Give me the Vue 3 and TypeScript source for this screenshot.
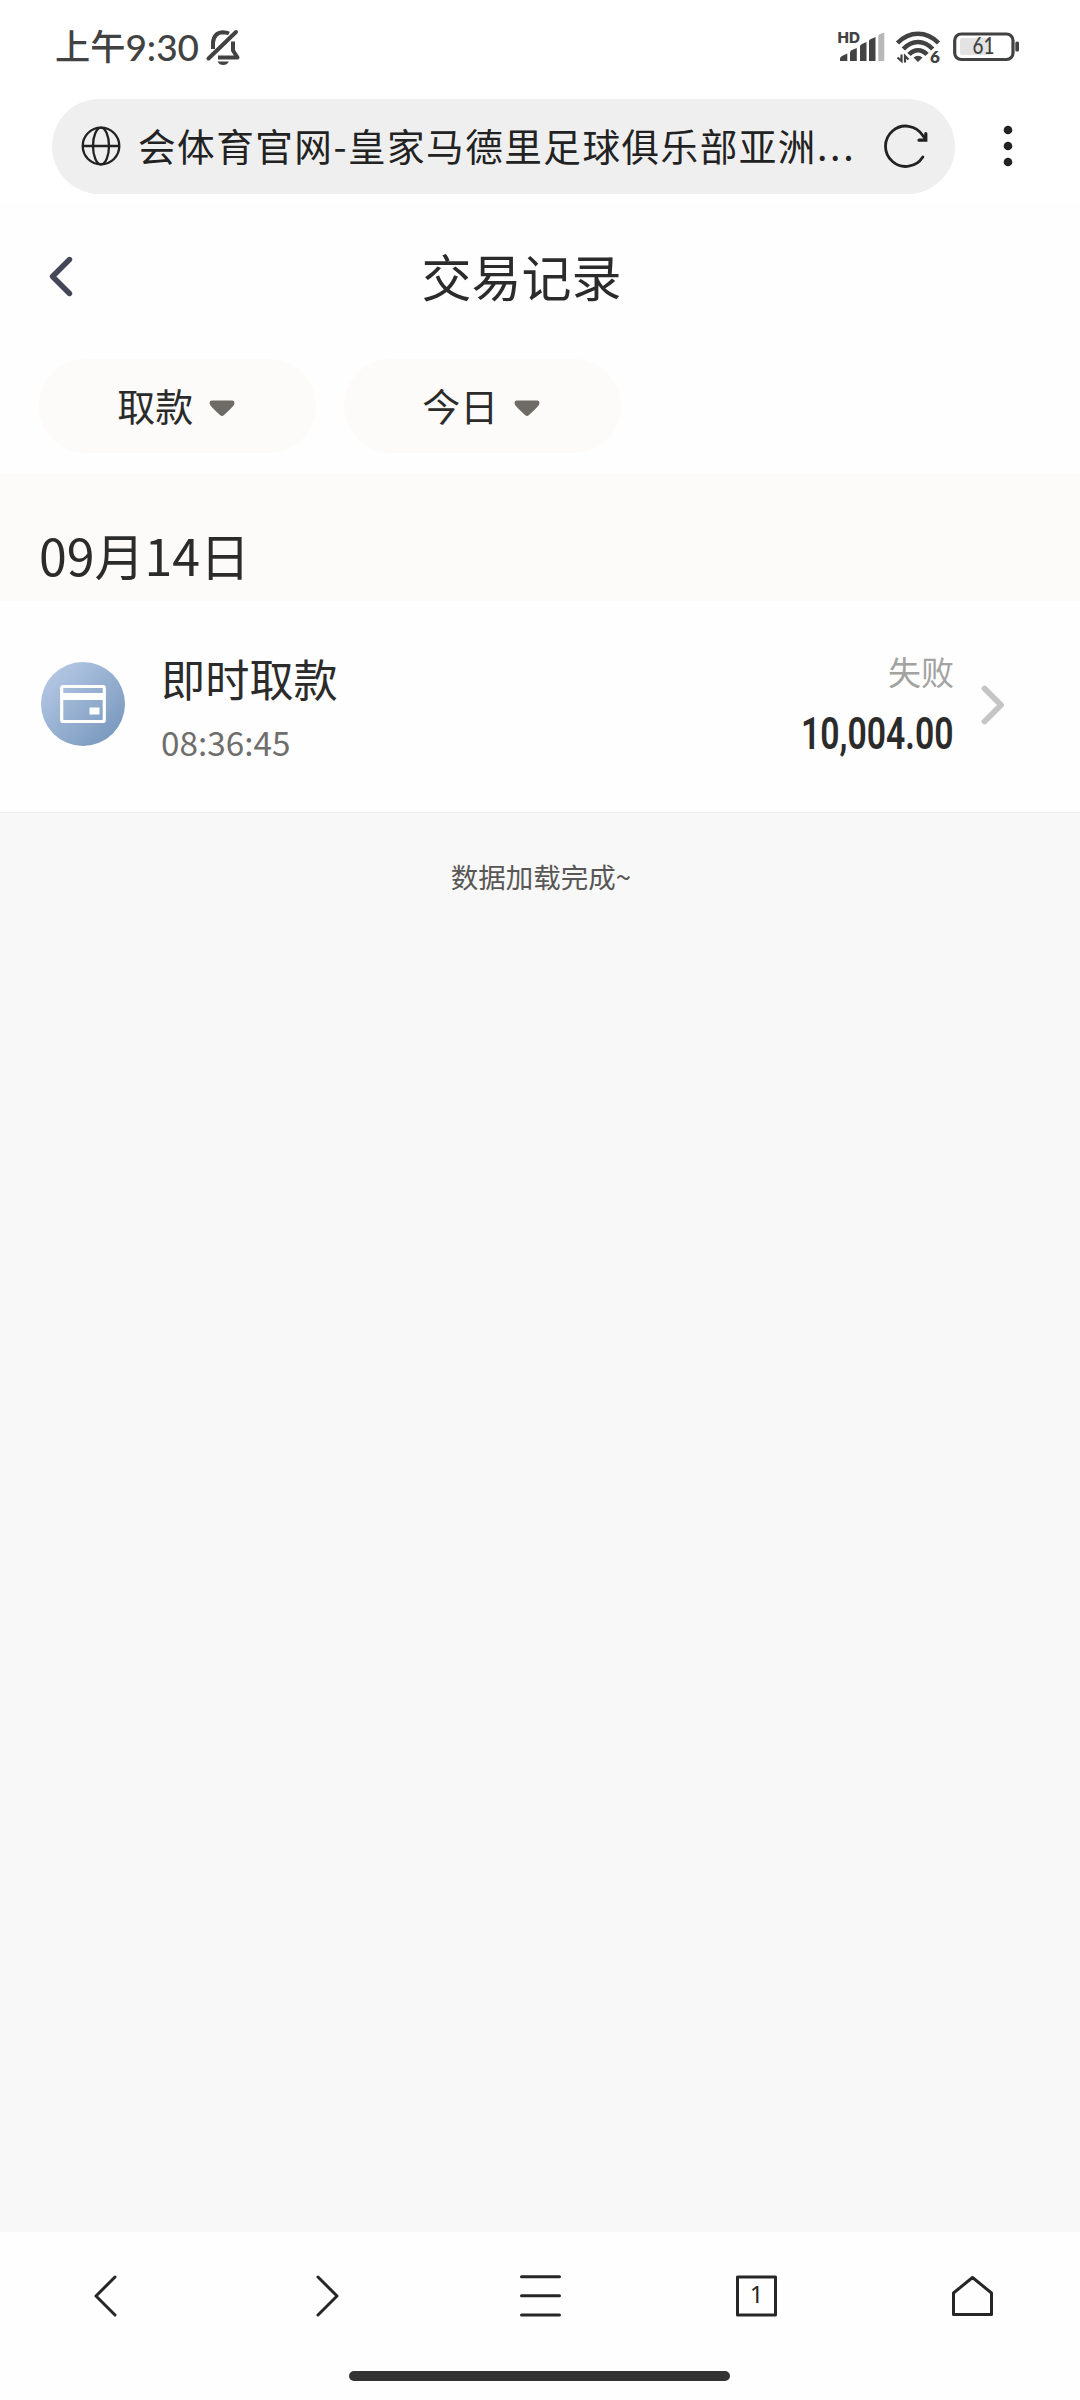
<script setup lang="ts">
interface TradeRecord {
  title: string
  time: string
  status: string
  amount: string
}

const filters: string[] = ['取款', '今日']
const records: TradeRecord[] = [
  { title: '即时取款', time: '08:36:45', status: '失败', amount: '10,004.00' },
]
</script>

<template>
  <div class="screen">
    <div class="status">
      <span class="clock">上午</span><span class="digits">9:30</span>
      <svg class="bell" width="36" height="38" viewBox="0 0 36 38" fill="none" stroke="#424242" stroke-width="4">
        <path d="M8 21V14.500Q9 4.500 18 4.200Q21.500 4.200 24 5.500" />
        <path d="M28 13.500V22.500L32.500 29.500H13" stroke-linejoin="round" />
        <path d="M3.500 30.500L31 4" stroke-linecap="round" />
        <path d="M12.500 33.500H24Q22 37 18.200 37T12.500 33.500Z" fill="#424242" stroke="none" />
      </svg>
      <svg class="signals" width="184" height="40" viewBox="836 30 184 40">
        <text x="837.5" y="42.900" textLength="22.500" lengthAdjust="spacingAndGlyphs" class="hd">HD</text>
        <g fill="#424242">
          <path d="M840 61V58.500Q840 57 842 56L847.300 53.500V61Z" />
          <path d="M850 61V52.500Q850 50.500 852 50L856.800 48V61Z" />
          <path d="M860 61V46.500Q860 44.500 862 44L866.500 42V61Z" />
          <path d="M869 61V41Q869 39.500 871 39L875.500 37V61Z" />
        </g>
        <path d="M878.300 61V36Q878.300 34.500 880 34L884.300 32.500V61Z" fill="#b8b8b8" />
        <g fill="none" stroke="#424242" stroke-width="4.600">
          <path d="M897.500 43Q906.500 33.800 918 33.800T938.500 43" />
          <path d="M903.300 49Q910 42 918 42T932.700 49" />
          <path d="M909 54.500Q913 50.200 918 50.200T927 54.500" />
        </g>
        <path d="M913.500 57.500Q918 54 922.500 57.500L918 62Z" fill="#424242" />
        <path d="M897.500 57.500L901.500 61V54.500M905 62.500V56L908.500 59.500" fill="none" stroke="#424242" stroke-width="2.200" />
        <text x="930" y="62.700" class="six">6</text>
        <rect x="954.700" y="34" width="58.300" height="25.500" rx="6.500" fill="none" stroke="#424242" stroke-width="3.200" />
        <rect x="960" y="38" width="31" height="17" rx="2" fill="#e3e3e3" />
        <rect x="1015.300" y="41.500" width="3.700" height="10" rx="1.500" fill="#424242" />
        <text x="972.500" y="54" textLength="22" lengthAdjust="spacingAndGlyphs" class="level">61</text>
      </svg>
    </div>

    <div class="browser">
      <div class="address">
        <svg class="globe" width="40" height="40" viewBox="0 0 40 40" fill="none" stroke="#222" stroke-width="2.300">
          <circle cx="20" cy="20" r="18.300" />
          <ellipse cx="20" cy="20" rx="8" ry="18.300" />
          <path d="M2 20H38" />
        </svg>
        <span class="url">会体育官网-皇家马德里足球俱乐部亚洲<span class="dots">...</span></span>
        <svg class="reload" width="46" height="46" viewBox="0 0 46 46" fill="none" stroke="#222" stroke-width="2.800" stroke-linecap="round">
          <path d="M39.800 34A20.200 20.200 0 1 1 39.800 12.500L42.300 16" />
          <path d="M36 17.200H42.800V10.500" stroke-width="3.200" />
        </svg>
      </div>
      <svg class="more" width="12" height="44" viewBox="0 0 12 44" fill="#222">
        <circle cx="6" cy="6" r="4.300" /><circle cx="6" cy="22" r="4.300" /><circle cx="6" cy="38" r="4.300" />
      </svg>
    </div>

    <header class="head">
      <svg width="28" height="44" viewBox="0 0 28 44" fill="none" stroke="#444757" stroke-width="5.400" stroke-linecap="round" stroke-linejoin="round">
        <path d="M22.500 4.500L5.500 21.500L22.500 38.500" />
      </svg>
      <h1>交易记录</h1>
    </header>

    <div class="filters">
      <button v-for="f in filters" :key="f" class="chip">
        <span>{{ f }}</span>
        <svg width="26" height="17" viewBox="0 0 26 17" fill="#6e6b66">
          <path d="M3 0.500H23Q26 0.500 25.300 4Q24.500 6.500 15 15Q13 16.800 11 15Q1.500 6.500 0.700 4Q0 0.500 3 0.500Z" />
        </svg>
      </button>
    </div>

    <h2 class="day">09月14日</h2>

    <div v-for="r in records" :key="r.time" class="row">
      <svg class="badge" width="84" height="84" viewBox="0 0 84 84">
        <defs>
          <linearGradient id="badge-fill" x1="0.100" y1="0.100" x2="0.900" y2="0.900">
            <stop offset="0" stop-color="#b5c8e4" />
            <stop offset="1" stop-color="#7898bd" />
          </linearGradient>
        </defs>
        <circle cx="42" cy="42" r="42" fill="url(#badge-fill)" />
        <rect x="20.700" y="24.500" width="42.600" height="35" rx="1.500" fill="none" stroke="#fff" stroke-width="3.200" />
        <path d="M20 31H64V38H20ZM48.500 45.500H58.500V52.500H48.500Z" fill="#fff" />
      </svg>
      <div class="info">
        <div class="name">{{ r.title }}</div>
        <div class="time">{{ r.time }}</div>
      </div>
      <div class="result">
        <div class="state">{{ r.status }}</div>
        <svg width="220" height="60" viewBox="0 0 220 60">
          <text x="67" y="46" textLength="152.500" lengthAdjust="spacingAndGlyphs" class="amount">{{ r.amount }}</text>
        </svg>
      </div>
      <svg class="go" width="28" height="44" viewBox="0 0 28 44" fill="none" stroke="#c5c5c5" stroke-width="5.800" stroke-linecap="round" stroke-linejoin="round">
        <path d="M5.500 5.500L22 22L5.500 38.500" />
      </svg>
    </div>

    <p class="end">数据加载完成~</p>

    <footer class="dock">
      <nav>
        <svg width="60" height="48" viewBox="0 0 60 48"><path d="M37 5L18 24L37 43" /></svg>
        <svg width="60" height="48" viewBox="0 0 60 48"><path d="M24 5L43 24L24 43" /></svg>
        <svg width="60" height="48" viewBox="0 0 60 48"><path d="M11.500 4.700H49.500M11.500 23.800H49.500M11.500 42.900H49.500" /></svg>
        <svg width="60" height="48" viewBox="0 0 60 48"><rect x="11.500" y="5" width="38" height="38" /><text x="30.500" y="31.200" class="tabs">1</text></svg>
        <svg width="60" height="48" viewBox="0 0 60 48"><path d="M11.500 21L30.500 5.500L49.500 21V42.500H11.500Z" /></svg>
      </nav>
      <div class="handle"></div>
    </footer>
  </div>
</template>

<style>
body {
  margin: 0;
}
</style>

<style scoped>
.screen {
  width: 1080px;
  height: 2400px;
  display: flex;
  flex-direction: column;
  background: #f8f8f8;
  color: #2b2b2b;
  font-family: "Noto Sans CJK SC", sans-serif;
}
.status {
  height: 90px;
  display: flex;
  align-items: flex-start;
  box-sizing: border-box;
  padding: 28px 60px 0 55px;
  background: #fff;
  color: #424242;
}
.clock {
  margin-top: -1px;
  font-size: 35.200px;
  line-height: 36px;
  font-weight: 500;
}
.digits {
  font-family: Lato, sans-serif;
  font-size: 37px;
  line-height: 37px;
  font-weight: 500;
}
.bell {
  margin-left: 6px;
}
.signals {
  margin: 2px 0 0 auto;
  overflow: visible;
}
.signals text {
  fill: #424242;
}
.hd {
  font: 800 14.500px Inter, sans-serif;
}
.six {
  font: 800 17px Lato, sans-serif;
}
.level {
  font: 500 23px Lato, sans-serif;
}
.browser {
  display: flex;
  align-items: center;
  height: 112px;
  padding-left: 52px;
  background: #fff;
}
.address {
  display: flex;
  align-items: center;
  box-sizing: border-box;
  width: 903px;
  height: 95px;
  padding: 0 26px 0 29px;
  border-radius: 48px;
  background: #efefef;
}
.url {
  margin-left: 17px;
  padding-bottom: 3px;
  font-size: 37.600px;
  letter-spacing: 1.500px;
  white-space: nowrap;
  color: #222;
}
.dots {
  letter-spacing: 2.800px;
}
.reload {
  margin-left: auto;
}
.more {
  margin-left: 47px;
}
.head {
  height: 157px;
  display: flex;
  align-items: center;
  box-sizing: border-box;
  padding: 0 0 7px 46.500px;
  background: #fefefe;
}
.head h1 {
  margin: 0 0 0 347px;
  padding-bottom: 4px;
  font-size: 50px;
  font-weight: 400;
  line-height: 60px;
}
.filters {
  display: flex;
  gap: 28px;
  height: 115px;
  padding-left: 39px;
  background: #fefefe;
}
.chip {
  display: flex;
  align-items: center;
  justify-content: center;
  gap: 15.500px;
  width: 277px;
  height: 94px;
  padding: 0 3px 0 0;
  border: 0;
  border-radius: 47px;
  background: #fcfbf9;
  color: #2b2b2b;
  font: 400 38px "Noto Sans CJK SC", sans-serif;
}
.chip span {
  padding-bottom: 3px;
}
.chip svg {
  margin-top: 4px;
}
.day {
  box-sizing: border-box;
  height: 127px;
  margin: 0;
  padding: 50px 0 0 39px;
  background: #fcfbf9;
  font-size: 50px;
  font-weight: 400;
  line-height: 60px;
}
.row {
  display: flex;
  align-items: flex-start;
  box-sizing: border-box;
  height: 212px;
  padding: 0 73px 0 41px;
  border-bottom: 1px solid #ededed;
  background: #fefefe;
}
.badge {
  margin-top: 61px;
}
.info {
  margin: 48px 0 0 36px;
}
.name {
  font-size: 44.200px;
  line-height: 58px;
}
.time {
  margin-top: 12px;
  font-size: 33.300px;
  line-height: 46px;
  color: #6f6e6c;
}
.result {
  display: flex;
  flex-direction: column;
  align-items: flex-end;
  margin: 46px 0 0 auto;
}
.state {
  font-size: 33px;
  line-height: 48px;
  color: #a3a3a1;
}
.result svg {
  margin-top: 8px;
}
.amount {
  font: 600 45px Roboto, sans-serif;
  fill: #2b2b2b;
}
.go {
  margin: 82px 0 0 25px;
}
.end {
  margin: 43px 0 0 2px;
  text-align: center;
  font-size: 27.500px;
  line-height: 40px;
  color: #585755;
}
.dock {
  height: 168px;
  margin-top: auto;
  background: #fefefe;
}
.dock nav {
  display: grid;
  grid-template-columns: repeat(5, 216px);
  justify-items: center;
  padding-top: 39.500px;
}
.dock svg {
  fill: none;
  stroke: #262626;
  stroke-width: 3;
  stroke-linecap: round;
  stroke-linejoin: round;
}
.dock .tabs {
  font: 400 24px "Noto Sans", sans-serif;
  text-anchor: middle;
  fill: #262626;
  stroke: none;
}
.handle {
  width: 381px;
  height: 10px;
  margin: 51.500px 0 0 349px;
  border-radius: 5px;
  background: #333;
}
</style>
